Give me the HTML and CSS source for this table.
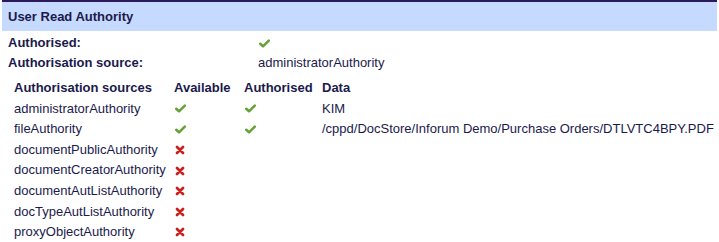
FILE: index.html
```html
<!DOCTYPE html>
<html>
<head>
<meta charset="utf-8">
<link rel="stylesheet" href="styles.css">
</head>
<body>
<div class="panel">
  <div class="title">User Read Authority</div>
  <div class="summary">
    <div class="srow"><span class="lbl">Authorised:</span><span class="val"><svg class="ok" viewBox="0 0 11 9"><path d="M1.2 4.8 L4 7.3 L9.8 1.6" fill="none" stroke="#64a236" stroke-width="2.5" stroke-linecap="round" stroke-linejoin="round"/></svg></span></div>
    <div class="srow"><span class="lbl">Authorisation source:</span><span class="val">administratorAuthority</span></div>
  </div>
  <div class="sources">
    <div class="row head"><span>Authorisation sources</span><span>Available</span><span>Authorised</span><span>Data</span></div>
    <div class="row"><span>administratorAuthority</span><span><svg class="ok" viewBox="0 0 11 9"><path d="M1.2 4.8 L4 7.3 L9.8 1.6" fill="none" stroke="#64a236" stroke-width="2.5" stroke-linecap="round" stroke-linejoin="round"/></svg></span><span><svg class="ok" viewBox="0 0 11 9"><path d="M1.2 4.8 L4 7.3 L9.8 1.6" fill="none" stroke="#64a236" stroke-width="2.5" stroke-linecap="round" stroke-linejoin="round"/></svg></span><span>KIM</span></div>
    <div class="row"><span>fileAuthority</span><span><svg class="ok" viewBox="0 0 11 9"><path d="M1.2 4.8 L4 7.3 L9.8 1.6" fill="none" stroke="#64a236" stroke-width="2.5" stroke-linecap="round" stroke-linejoin="round"/></svg></span><span><svg class="ok" viewBox="0 0 11 9"><path d="M1.2 4.8 L4 7.3 L9.8 1.6" fill="none" stroke="#64a236" stroke-width="2.5" stroke-linecap="round" stroke-linejoin="round"/></svg></span><span>/cppd/DocStore/Inforum Demo/Purchase Orders/DTLVTC4BPY.PDF</span></div>
    <div class="row"><span>documentPublicAuthority</span><span><svg class="no" viewBox="0 0 10 10"><path d="M2 2 L8 8 M8 2 L2 8" fill="none" stroke="#c8201e" stroke-width="2.8" stroke-linecap="round"/></svg></span><span></span><span></span></div>
    <div class="row"><span>documentCreatorAuthority</span><span><svg class="no" viewBox="0 0 10 10"><path d="M2 2 L8 8 M8 2 L2 8" fill="none" stroke="#c8201e" stroke-width="2.8" stroke-linecap="round"/></svg></span><span></span><span></span></div>
    <div class="row"><span>documentAutListAuthority</span><span><svg class="no" viewBox="0 0 10 10"><path d="M2 2 L8 8 M8 2 L2 8" fill="none" stroke="#c8201e" stroke-width="2.8" stroke-linecap="round"/></svg></span><span></span><span></span></div>
    <div class="row"><span>docTypeAutListAuthority</span><span><svg class="no" viewBox="0 0 10 10"><path d="M2 2 L8 8 M8 2 L2 8" fill="none" stroke="#c8201e" stroke-width="2.8" stroke-linecap="round"/></svg></span><span></span><span></span></div>
    <div class="row"><span>proxyObjectAuthority</span><span><svg class="no" viewBox="0 0 10 10"><path d="M2 2 L8 8 M8 2 L2 8" fill="none" stroke="#c8201e" stroke-width="2.8" stroke-linecap="round"/></svg></span><span></span><span></span></div>
  </div>
</div>
</body>
</html>
```
FILE: styles.css
```css
html, body {
  margin: 0;
  padding: 0;
  background: #ffffff;
}
body {
  font-family: "Liberation Sans", Arial, sans-serif;
  font-size: 13px;
  color: #1b1a4c;
}
.panel {
  padding: 0 2px;
}
.title {
  border-top: 2px solid #2a1a5c;
  background: #c6d9fe;
  height: 29px;
  line-height: 29px;
  padding-left: 6px;
  font-weight: bold;
}
.summary {
  padding: 2px 0 0 6px;
}
.srow {
  display: grid;
  grid-template-columns: 250px 1fr;
  height: 20px;
  line-height: 20px;
  font-weight: bold;
  align-items: center;
}
.srow .val {
  font-weight: normal;
  display: flex;
  align-items: center;
}
.sources {
  padding: 5px 0 0 12px;
}
.row {
  display: grid;
  grid-template-columns: 160px 70px 78px 1fr;
  height: 20.6px;
  line-height: 20.6px;
  align-items: center;
}
.row > span {
  display: flex;
  align-items: center;
  white-space: nowrap;
}
.row.head {
  font-weight: bold;
}
.ok {
  width: 11px;
  height: 9px;
  margin-left: 1px;
}
.no {
  width: 10px;
  height: 10px;
  margin-left: 1px;
}
```
